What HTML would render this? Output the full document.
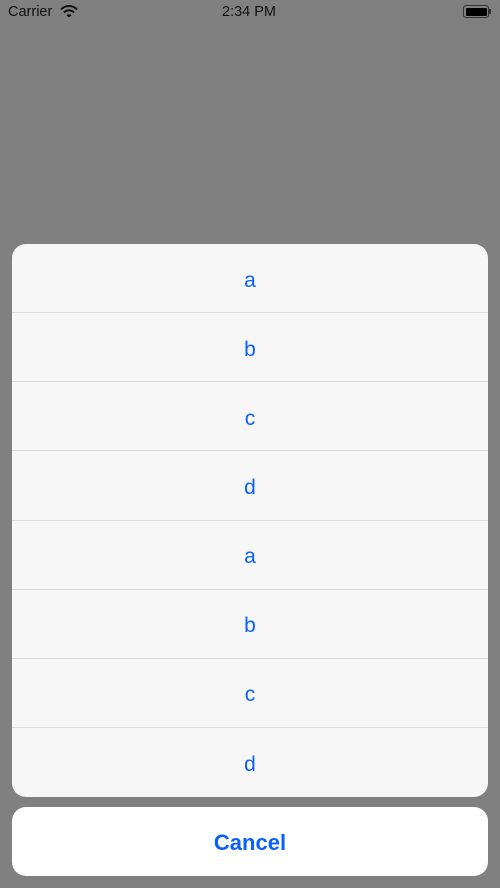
<!DOCTYPE html>
<html><head><style>
body{margin:0;width:500px;height:888px;background:#808080;font-family:"Liberation Sans",sans-serif;position:relative;overflow:hidden}
.sb{position:absolute;top:0;left:0;width:500px;height:26px;font-size:14.5px;color:#111}
.panel{position:absolute;left:12px;top:244px;width:476px;height:553px;background:#f7f7f7;border-radius:14px;overflow:hidden}
.row{height:69.125px;box-sizing:border-box;border-bottom:1px solid #dcdcdc;display:flex;align-items:center;justify-content:center;color:#0a60fe;font-size:21px;padding-top:5px}
.row:last-child{border-bottom:none}
.cancel{position:absolute;left:12px;top:807px;width:476px;height:69px;background:#fff;border-radius:14px;display:flex;align-items:center;justify-content:center;color:#0a60fe;font-size:22px;font-weight:bold;padding-top:2px;box-sizing:border-box}
</style></head><body>
<div class="sb">
<span style="position:absolute;left:8px;top:4px">Carrier</span>
<svg style="position:absolute;left:60px;top:5px" width="18" height="13" viewBox="0 0 18 13"><path d="M1 4.5A11 11 0 0 1 17 4.5" stroke="#111" stroke-width="2" fill="none"/><path d="M4 7.5A7 7 0 0 1 14 7.5" stroke="#111" stroke-width="2" fill="none"/><path d="M6.5 10.2L9 12.5L11.5 10.2A3.5 3.5 0 0 0 6.5 10.2Z" fill="#111"/></svg>
<span style="position:absolute;left:222px;top:4px;font-weight:500">2:34 PM</span>
<div style="position:absolute;left:463px;top:5px;width:26px;height:13px;border:1px solid #333;border-radius:3px;box-sizing:border-box;padding:1.5px"><div style="background:#000;width:100%;height:100%;border-radius:1px"></div></div>
<div style="position:absolute;left:489px;top:9px;width:2px;height:5px;background:#333"></div>
</div>
<div class="panel">
<div class="row">a</div><div class="row">b</div><div class="row">c</div><div class="row">d</div>
<div class="row">a</div><div class="row">b</div><div class="row">c</div><div class="row">d</div>
</div>
<div class="cancel">Cancel</div>
</body></html>
